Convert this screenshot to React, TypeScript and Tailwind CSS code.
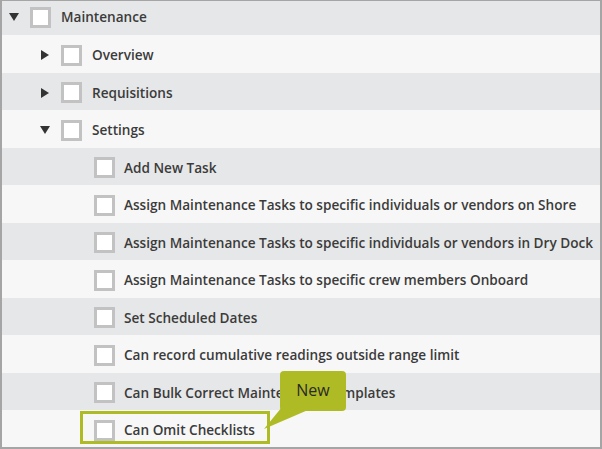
type Row = {
  label: string;
  level: 0 | 1 | 2;
  caret?: "down" | "right";
};

const ROWS: Row[] = [
  { label: "Maintenance", level: 0, caret: "down" },
  { label: "Overview", level: 1, caret: "right" },
  { label: "Requisitions", level: 1, caret: "right" },
  { label: "Settings", level: 1, caret: "down" },
  { label: "Add New Task", level: 2 },
  { label: "Assign Maintenance Tasks to specific individuals or vendors on Shore", level: 2 },
  { label: "Assign Maintenance Tasks to specific individuals or vendors in Dry Dock", level: 2 },
  { label: "Assign Maintenance Tasks to specific crew members Onboard", level: 2 },
  { label: "Set Scheduled Dates", level: 2 },
  { label: "Can record cumulative readings outside range limit", level: 2 },
  { label: "Can Bulk Correct Maintenance Templates", level: 2 },
  { label: "Can Omit Checklists", level: 2 },
];

function Caret({ dir }: { dir: "down" | "right" }) {
  return (
    <svg width="12" height="12" viewBox="0 0 12 12" className="shrink-0">
      {dir === "down" ? (
        <polygon points="1,2 11,2 6,10" fill="#333" />
      ) : (
        <polygon points="2,1 10,6 2,11" fill="#333" />
      )}
    </svg>
  );
}

function Checkbox() {
  return <span className="block w-[21px] h-[21px] shrink-0 border-[3px] border-[#c2c2c2] bg-white" />;
}

export default function App() {
  return (
    <div
      className="relative w-[602px] h-[449px] overflow-hidden bg-[#f7f7f7] border-t border-x-2 border-b-2 border-[#a5a5a5] text-[#3b3b3b]"
      style={{ fontFamily: '"Open Sans", "Liberation Sans", sans-serif' }}
    >
      {ROWS.map((row, i) => {
        const pad = row.level === 0 ? "pl-[6px]" : row.level === 1 ? "pl-[37px]" : "pl-[92px]";
        const gap = row.level === 2 ? "ml-[9px]" : "ml-[10px]";
        const height = i === 0 ? "h-[34px] pb-[2px]" : "h-[37.5px] pt-[3px]";
        return (
          <div
            key={row.label}
            className={`flex items-center ${height} ${pad} ${i % 2 === 0 ? "bg-[#e6e7e8]" : "bg-[#f7f7f7]"}`}
          >
            {row.caret && (
              <span className="w-[22px] flex items-center">
                <Caret dir={row.caret} />
              </span>
            )}
            <Checkbox />
            <span className={`${gap} text-[13.6px] font-semibold whitespace-nowrap`}>{row.label}</span>
          </div>
        );
      })}

      {/* highlight around the newly added permission */}
      <div className="absolute left-[78px] top-[410px] w-[190px] h-[33px] border-[3px] border-[#afbb24]" />

      {/* "New" callout */}
      <svg className="absolute left-[258px] top-[400px]" width="60" height="32" viewBox="0 0 60 32">
        <polygon points="22,6 4,28 48,9" fill="#afbb24" />
      </svg>
      <div className="absolute left-[278px] top-[370px] w-[66px] h-[40px] rounded-[4px] bg-[#afbb24] flex items-center justify-center text-[16px] text-[#2a2a2a] pb-[2px]">
        New
      </div>
    </div>
  );
}
